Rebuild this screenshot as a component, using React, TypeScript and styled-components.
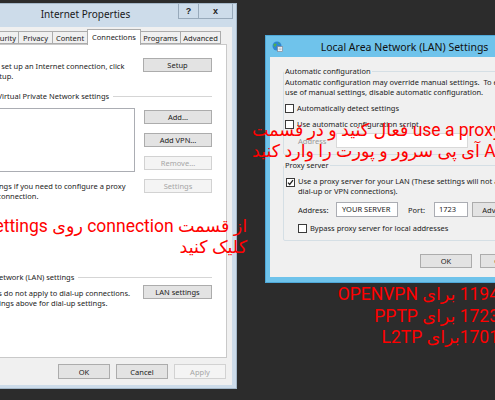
import styled, { createGlobalStyle } from 'styled-components';

const GlobalStyle = createGlobalStyle`
  html, body {
    margin: 0;
    padding: 0;
    background: #2c2c2c;
  }
  body {
    font-family: 'Noto Sans', 'Open Sans', sans-serif;
  }
`;

const Desktop = styled.div`
  position: relative;
  width: 495px;
  height: 400px;
  overflow: hidden;
  background: #2c2c2c;
  font-size: 7.5px;
  line-height: 10px;
  color: #1b1b1b;
`;

const Window = styled.div<{ $x: number; $y: number; $w: number; $h: number; $frame: string; $edge: string }>`
  position: absolute;
  left: ${({ $x }) => $x}px;
  top: ${({ $y }) => $y}px;
  width: ${({ $w }) => $w}px;
  height: ${({ $h }) => $h}px;
  box-sizing: border-box;
  display: flex;
  flex-direction: column;
  background: ${({ $frame }) => $frame};
  border: 1px solid ${({ $edge }) => $edge};
`;

const Frame = styled.div<{ $bottom: number }>`
  flex: 1;
  display: flex;
  flex-direction: column;
  padding: 0 4px ${({ $bottom }) => $bottom}px 4px;
  min-height: 0;
`;

/* ---------- Internet Properties ---------- */

const PropsTitleBar = styled.div`
  display: flex;
  height: 23px;
  flex-shrink: 0;
`;

const PropsTitle = styled.div`
  flex: 1;
  padding: 4px 0 0 58px;
  text-align: center;
  font-size: 10px;
  line-height: 12px;
  color: #1a1a1a;
`;

const CaptionButtons = styled.div`
  display: flex;
  height: 15px;
  margin-right: 3px;
`;

const CaptionButton = styled.div<{ $w: number }>`
  width: ${({ $w }) => $w}px;
  box-sizing: border-box;
  border: 1px solid #98aabb;
  border-top: none;
  display: flex;
  align-items: center;
  justify-content: center;
  font-family: 'Liberation Sans', sans-serif;
  font-weight: bold;
  font-size: 9px;
  color: #222;

  & + & {
    border-left: none;
  }
`;

const Client = styled.div`
  flex: 1;
  display: flex;
  flex-direction: column;
  background: #f0f0f0;
  padding: 2px 5px 6px 5px;
`;

const Tabs = styled.div`
  display: flex;
  align-items: flex-end;
  height: 15px;
  padding-left: 2px;
  position: relative;
  z-index: 1;
`;

const Tab = styled.div<{ $w: number; $active?: boolean }>`
  width: ${({ $w }) => $w}px;
  height: ${({ $active }) => ($active ? 16 : 13)}px;
  margin-bottom: ${({ $active }) => ($active ? -1 : 0)}px;
  box-sizing: border-box;
  flex-shrink: 0;
  border: 1px solid #acacac;
  border-bottom: ${({ $active }) => ($active ? 'none' : '1px solid #acacac')};
  background: ${({ $active }) => ($active ? '#fff' : '#f0f0f0')};
  display: flex;
  align-items: ${({ $active }) => ($active ? 'flex-start' : 'center')};
  justify-content: center;
  padding-top: ${({ $active }) => ($active ? 2 : 0)}px;
  white-space: nowrap;

  & + & {
    margin-left: -1px;
  }
`;

const TabPanel = styled.div`
  height: 314px;
  box-sizing: border-box;
  flex-shrink: 0;
  background: #fff;
  border: 1px solid #c9c9c9;
  padding: 13px 14px 0 10px;
  display: flex;
  flex-direction: column;
`;

const SplitRow = styled.div<{ $mt?: number }>`
  display: flex;
  justify-content: space-between;
  align-items: flex-start;
  margin-top: ${({ $mt }) => $mt ?? 0}px;
`;

const Para = styled.div<{ $mt?: number; $ml?: number }>`
  margin-top: ${({ $mt }) => $mt ?? 0}px;
  margin-left: ${({ $ml }) => $ml ?? 0}px;
  white-space: nowrap;
`;

const Heading = styled.div<{ $mt: number }>`
  display: flex;
  align-items: center;
  gap: 4px;
  margin-top: ${({ $mt }) => $mt}px;
  white-space: nowrap;

  &::after {
    content: '';
    flex: 1;
    border-top: 1px solid #d5d5d5;
  }
`;

const VpnBlock = styled.div`
  display: flex;
  gap: 9px;
  margin-top: 7px;
`;

const VpnColumn = styled.div`
  width: 181px;
  display: flex;
  flex-direction: column;
`;

const ListBox = styled.div`
  height: 64px;
  box-sizing: border-box;
  border: 1px solid #abadb3;
  background: #fff;
`;

const ButtonStack = styled.div`
  display: flex;
  flex-direction: column;
  gap: 9px;
  margin-top: 2px;
`;

const Button = styled.div<{ $w: number; $h?: number; $disabled?: boolean; $ml?: number }>`
  width: ${({ $w }) => $w}px;
  height: ${({ $h }) => $h ?? 14}px;
  margin-left: ${({ $ml }) => $ml ?? 0}px;
  box-sizing: border-box;
  flex-shrink: 0;
  border: 1px solid ${({ $disabled }) => ($disabled ? '#d2d2d2' : '#acacac')};
  background: ${({ $disabled }) => ($disabled ? '#f4f4f4' : '#e3e3e3')};
  color: ${({ $disabled }) => ($disabled ? '#a6a6a6' : '#1b1b1b')};
  display: flex;
  align-items: center;
  justify-content: center;
  white-space: nowrap;
`;

const DialogButtons = styled.div<{ $gap: number; $mt: number; $pr: number }>`
  display: flex;
  justify-content: flex-end;
  gap: ${({ $gap }) => $gap}px;
  margin-top: ${({ $mt }) => $mt}px;
  padding-right: ${({ $pr }) => $pr}px;
`;

/* ---------- LAN Settings ---------- */

const LanTitleBar = styled.div`
  display: flex;
  align-items: center;
  height: 21px;
  flex-shrink: 0;
  padding-left: 6px;
`;

const LanTitle = styled.div`
  flex: 1;
  padding-right: 17px;
  text-align: center;
  font-size: 10.5px;
  line-height: 12px;
  color: #111;
  white-space: nowrap;
`;

const LanClient = styled.div`
  flex: 1;
  display: flex;
  flex-direction: column;
  background: #f0f0f0;
  padding: 9px 0 0 13px;
`;

const Group = styled.fieldset<{ $mt?: number; $pt: number; $pb: number }>`
  margin: ${({ $mt }) => $mt ?? 0}px 0 0 0;
  padding: ${({ $pt }) => $pt}px 0 ${({ $pb }) => $pb}px 1px;
  width: 245px;
  min-width: 0;
  box-sizing: border-box;
  border: 1px solid #d5dfe5;
  border-radius: 2px;
`;

const GroupLegend = styled.legend`
  padding: 0 1px;
  margin-left: -1px;
  line-height: 10px;
  white-space: nowrap;
`;

const CheckRow = styled.div<{ $mt?: number; $ml?: number; $align?: string }>`
  display: flex;
  align-items: ${({ $align }) => $align ?? 'center'};
  gap: 3px;
  margin-top: ${({ $mt }) => $mt ?? 0}px;
  margin-left: ${({ $ml }) => $ml ?? 0}px;
  white-space: nowrap;
`;

const CheckBox = styled.span<{ $mt?: number }>`
  width: 9px;
  height: 9px;
  box-sizing: border-box;
  flex-shrink: 0;
  border: 1px solid #3a3a3a;
  background: #fff;
  display: flex;
  margin-top: ${({ $mt }) => $mt ?? 0}px;
`;

const FieldRow = styled.div<{ $mt: number }>`
  display: flex;
  align-items: center;
  margin-top: ${({ $mt }) => $mt}px;
  margin-left: 13px;
  white-space: nowrap;
`;

const FieldLabel = styled.span<{ $w: number; $ml?: number; $muted?: boolean }>`
  width: ${({ $w }) => $w}px;
  margin-left: ${({ $ml }) => $ml ?? 0}px;
  color: ${({ $muted }) => ($muted ? '#9a9a9a' : 'inherit')};
  flex-shrink: 0;
`;

const TextBox = styled.div<{ $w: number; $pl?: number; $muted?: boolean }>`
  width: ${({ $w }) => $w}px;
  height: 15px;
  box-sizing: border-box;
  flex-shrink: 0;
  border: 1px solid ${({ $muted }) => ($muted ? '#d9d9d9' : '#abadb3')};
  background: #fff;
  padding-left: ${({ $pl }) => $pl ?? 4}px;
  line-height: 13px;
`;

/* ---------- red annotations ---------- */

const Note = styled.div<{ $top: number; $left?: number; $right?: number; $align: string; $lh: number }>`
  position: absolute;
  top: ${({ $top }) => $top}px;
  ${({ $left }) => ($left !== undefined ? `left: ${$left}px;` : '')}
  ${({ $right }) => ($right !== undefined ? `right: ${$right}px;` : '')}
  z-index: 5;
  direction: rtl;
  text-align: ${({ $align }) => $align};
  white-space: nowrap;
  font-family: Roboto, 'DejaVu Sans', sans-serif;
  font-size: 17.5px;
  line-height: ${({ $lh }) => $lh}px;
  color: #ff0000;
`;

const NoteLine = styled.div``;

function LanIcon() {
  return (
    <svg width="11" height="11" viewBox="0 0 11 11">
      <circle cx="5" cy="5" r="4.5" fill="#2f86d2" />
      <path d="M1.5 3.2c1.1-.9 2.4-.7 3 .1.4.6-.3 1.2-.9 1.5-.6.3-.5 1.1-.1 1.6-.9-.2-1.8-1.4-2-3.2z" fill="#4fb24a" />
      <path d="M6 1.3c.9.2 1.9 1 2.2 1.9-.7 0-1.3-.3-1.6-.8z" fill="#4fb24a" />
      <rect x="5.6" y="5.6" width="5" height="5" fill="#f3f5f8" stroke="#7d8896" strokeWidth="0.7" />
      <path d="M6.6 7.2h3M6.6 8.6h3" stroke="#9aa6b4" strokeWidth="0.6" />
    </svg>
  );
}

function Tick() {
  return (
    <svg width="7" height="7" viewBox="0 0 7 7">
      <path d="M1 3.6l1.7 1.8L6 1.2" fill="none" stroke="#222" strokeWidth="1.3" />
    </svg>
  );
}

function InternetProperties() {
  return (
    <Window $x={-66} $y={3} $w={303} $h={386} $frame="#cddcea" $edge="#a4b7c8">
      <PropsTitleBar>
        <PropsTitle>Internet Properties</PropsTitle>
        <CaptionButtons>
          <CaptionButton $w={21}>?</CaptionButton>
          <CaptionButton $w={34}>x</CaptionButton>
        </CaptionButtons>
      </PropsTitleBar>
      <Frame $bottom={3}>
        <Client>
          <Tabs>
            <Tab $w={40}>General</Tab>
            <Tab $w={34}>Security</Tab>
            <Tab $w={35}>Privacy</Tab>
            <Tab $w={36}>Content</Tab>
            <Tab $w={54} $active>
              Connections
            </Tab>
            <Tab $w={41}>Programs</Tab>
            <Tab $w={41}>Advanced</Tab>
          </Tabs>
          <TabPanel>
            <SplitRow>
              <Para $mt={3} $ml={36}>
                To set up an Internet connection, click
                <br />
                Setup.
              </Para>
              <Button $w={69}>Setup</Button>
            </SplitRow>

            <Heading $mt={10}>Dial-up and Virtual Private Network settings</Heading>

            <VpnBlock>
              <VpnColumn>
                <ListBox />
                <Para $mt={9}>
                  Choose Settings if you need to configure a proxy
                  <br />
                  server for a connection.
                </Para>
              </VpnColumn>
              <ButtonStack>
                <Button $w={68}>Add...</Button>
                <Button $w={68}>Add VPN...</Button>
                <Button $w={68} $disabled>
                  Remove...
                </Button>
                <Button $w={68} $disabled>
                  Settings
                </Button>
              </ButtonStack>
            </VpnBlock>

            <Heading $mt={71}>Local Area Network (LAN) settings</Heading>

            <SplitRow $mt={3}>
              <Para $mt={3} $ml={2}>
                LAN Settings do not apply to dial-up connections.
                <br />
                Choose Settings above for dial-up settings.
              </Para>
              <Button $w={69}>LAN settings</Button>
            </SplitRow>
          </TabPanel>
          <DialogButtons $gap={6} $mt={6} $pr={1}>
            <Button $w={52} $h={15}>
              OK
            </Button>
            <Button $w={52} $h={15}>
              Cancel
            </Button>
            <Button $w={52} $h={15} $disabled>
              Apply
            </Button>
          </DialogButtons>
        </Client>
      </Frame>
    </Window>
  );
}

function LanSettings() {
  return (
    <Window $x={265} $y={35} $w={279} $h={248} $frame="#6fc3eb" $edge="#4ea8d8">
      <LanTitleBar>
        <LanIcon />
        <LanTitle>Local Area Network (LAN) Settings</LanTitle>
      </LanTitleBar>
      <Frame $bottom={5}>
        <LanClient>
          <Group $pt={1} $pb={6}>
            <GroupLegend>Automatic configuration</GroupLegend>
            <Para>
              Automatic configuration may override manual settings.&nbsp; To ensure the
              <br />
              use of manual settings, disable automatic configuration.
            </Para>
            <CheckRow $mt={6}>
              <CheckBox />
              Automatically detect settings
            </CheckRow>
            <CheckRow $mt={6}>
              <CheckBox />
              Use automatic configuration script
            </CheckRow>
            <FieldRow $mt={4}>
              <FieldLabel $w={38} $muted>
                Address
              </FieldLabel>
              <TextBox $w={132} $muted />
            </FieldRow>
          </Group>

          <Group $mt={5} $pt={6} $pb={7}>
            <GroupLegend>Proxy server</GroupLegend>
            <CheckRow $align="flex-start" $ml={1}>
              <CheckBox $mt={2}>
                <Tick />
              </CheckBox>
              <span>
                Use a proxy server for your LAN (These settings will not apply to
                <br />
                dial-up or VPN connections).
              </span>
            </CheckRow>
            <FieldRow $mt={6}>
              <FieldLabel $w={38}>Address:</FieldLabel>
              <TextBox $w={62} $pl={5}>
                YOUR SERVER
              </TextBox>
              <FieldLabel $w={26} $ml={10}>
                Port:
              </FieldLabel>
              <TextBox $w={34}>1723</TextBox>
              <Button $w={55} $h={15} $ml={4}>
                Advanced
              </Button>
            </FieldRow>
            <CheckRow $mt={6} $ml={13}>
              <CheckBox />
              Bypass proxy server for local addresses
            </CheckRow>
          </Group>

          <DialogButtons $gap={8} $mt={13} $pr={7}>
            <Button $w={52} $h={14}>
              OK
            </Button>
            <Button $w={52} $h={14}>
              Cancel
            </Button>
          </DialogButtons>
        </LanClient>
      </Frame>
    </Window>
  );
}

export default function App() {
  return (
    <>
      <GlobalStyle />
      <Desktop>
        <InternetProperties />
        <LanSettings />

        <Note $top={216} $right={248} $align="right" $lh={21}>
          <NoteLine>از قسمت connection روی settings</NoteLine>
          <NoteLine>کلیک کنید</NoteLine>
        </Note>

        <Note $top={120} $left={252} $align="left" $lh={21}>
          <NoteLine>use a proxy server فعال کنید و در قسمت</NoteLine>
          <NoteLine>Address آی پی سرور و پورت را وارد کنید</NoteLine>
        </Note>

        <Note $top={284} $right={-4} $align="right" $lh={21.5}>
          <NoteLine>1194 برای OPENVPN</NoteLine>
          <NoteLine>1723 برای PPTP</NoteLine>
          <NoteLine>1701برای L2TP</NoteLine>
        </Note>
      </Desktop>
    </>
  );
}
